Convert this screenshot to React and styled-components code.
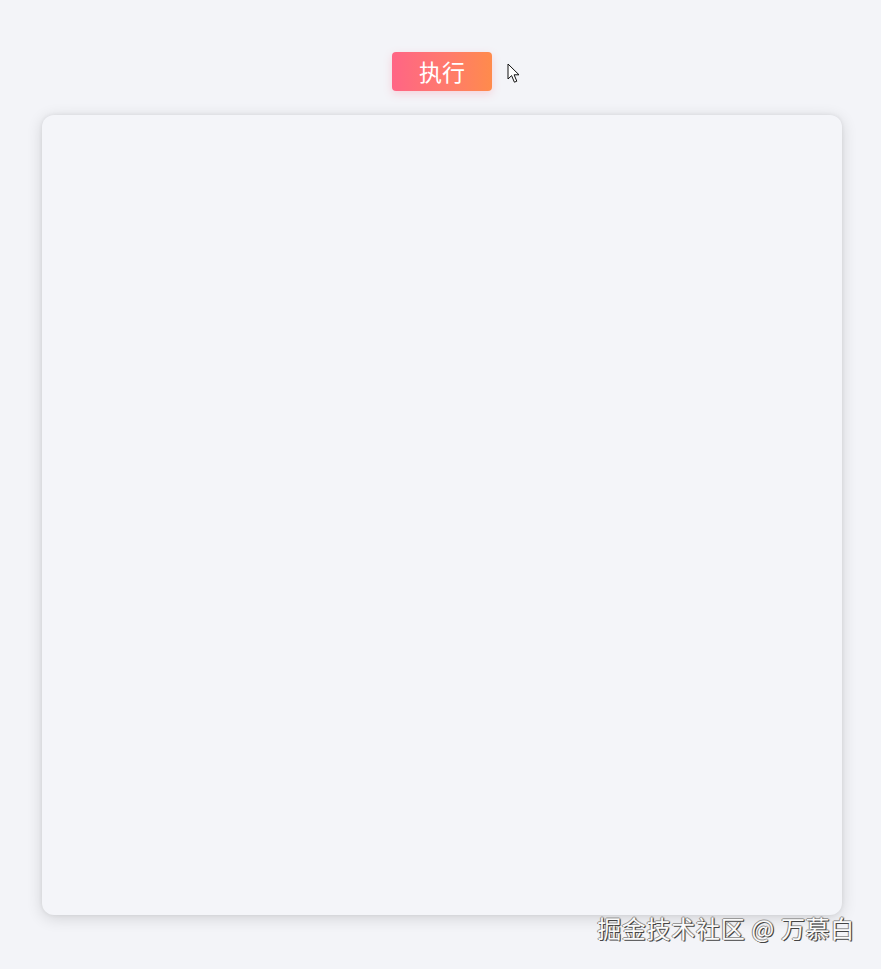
import React from "react"
import styled, { createGlobalStyle } from "styled-components"

const GlobalStyle = createGlobalStyle`
  html, body {
    margin: 0;
    padding: 0;
    background: #f3f4f8;
    font-family: "Noto Sans CJK SC", "Noto Sans", sans-serif;
  }
`

const App = () => {
  return (
    <Page>
      <GlobalStyle />
      <Toolbar>
        <RunButton>执行</RunButton>
        <Pointer viewBox="0 0 14 22" width="14" height="22">
          <path
            d="M1 1 L1 16 L4.6 12.6 L7.4 19.2 L9.8 18.2 L7.1 11.8 L12 11.8 Z"
            fill="#fff"
            stroke="#111"
            strokeWidth="1"
            strokeLinejoin="round"
          />
        </Pointer>
      </Toolbar>
      <Canvas />
      <Watermark>掘金技术社区 @ 万慕白</Watermark>
    </Page>
  )
}

export default App

const Page = styled.div`
  position: relative;
  width: 881px;
  height: 969px;
  display: flex;
  flex-direction: column;
  align-items: center;
  padding-top: 52px;
  box-sizing: border-box;
  overflow: hidden;
`

const Toolbar = styled.div`
  position: relative;
  display: flex;
  justify-content: center;
  margin-left: 3px;
`

const RunButton = styled.button`
  width: 100px;
  height: 39px;
  border: none;
  border-radius: 4px;
  background: linear-gradient(90deg, #ff6585 0%, #ff7a6c 55%, #ff8b4c 100%);
  box-shadow: 0 3px 8px rgba(255, 110, 130, 0.25);
  color: #fff;
  font-family: "Noto Sans CJK SC", sans-serif;
  font-size: 23px;
  line-height: 39px;
  padding: 0;
  cursor: pointer;
`

const Pointer = styled.svg`
  position: absolute;
  left: 115px;
  top: 11px;
`

const Canvas = styled.div`
  margin-top: 24px;
  margin-left: 3px;
  width: 800px;
  height: 800px;
  border-radius: 12px;
  background: #f4f5f9;
  box-shadow: 0 3px 16px rgba(0, 0, 0, 0.14), 0 0 4px rgba(0, 0, 0, 0.07);
`

const Watermark = styled.div`
  position: absolute;
  right: 26px;
  top: 910px;
  font-family: "Noto Sans CJK SC", sans-serif;
  font-size: 24px;
  letter-spacing: 0.7px;
  color: #fafafa;
  text-shadow: 1px 1px 0 #444, -1px 0 0 #888, 0 -1px 0 #999, 1px 0 1px #555;
  white-space: nowrap;
`
